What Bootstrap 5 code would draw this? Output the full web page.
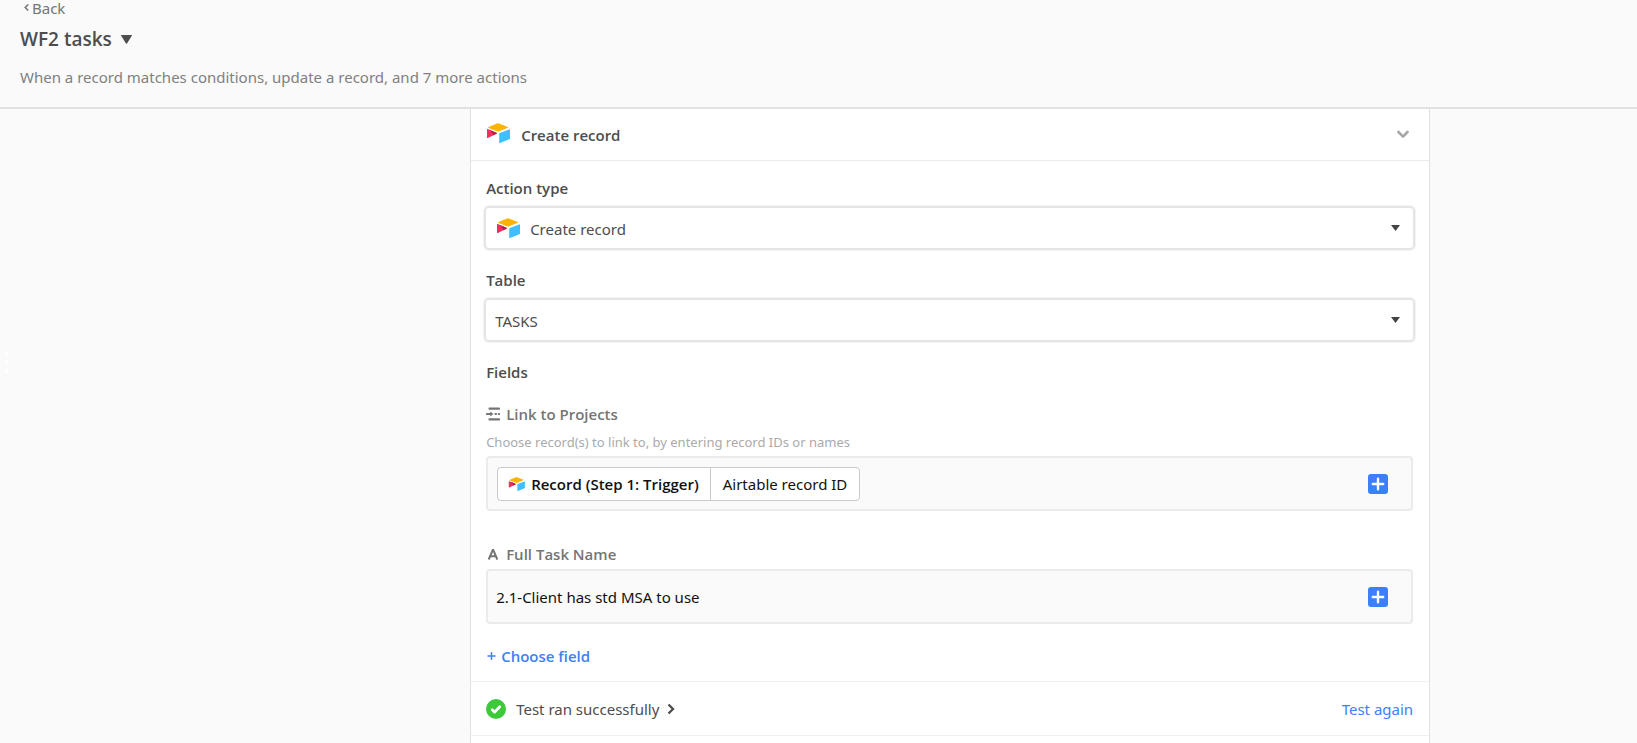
<!DOCTYPE html>
<html lang="en">
<head>
<meta charset="utf-8">
<meta name="viewport" content="width=device-width, initial-scale=1">
<title>WF2 tasks</title>
<link href="https://cdn.jsdelivr.net/npm/bootstrap@5.3.0/dist/css/bootstrap.min.css" rel="stylesheet">
<style>
  body { background: #fafafa; color: #4d4d4d; font: 15px/20px "Segoe UI", "Noto Sans", "Open Sans", sans-serif; }
  svg { display: block; flex: none; }
  button { line-height: 20px; }
  .page-head { height: 109px; border-bottom: 2px solid #e1e1e1; }
  .back-link { color: #757575; line-height: 16px; gap: 3px; padding-left: 4px; }
  .flow-title { font-size: 19px; line-height: 26px; font-weight: 600; font-family: "Segoe UI", "Open Sans", sans-serif; color: #4d4d4d; gap: 9px; padding: 10px 0 15px; }
  .flow-summary { color: #808080; }
  .stage { display: grid; grid-template-columns: minmax(0, 25fr) minmax(0, 960px) minmax(0, 11fr); }
  .step-panel { grid-column: 2; background: #fff; border: solid #e1e1e1; border-width: 0 1px; }
  .step-head { height: 52px; border-bottom: 1px solid #ebebeb; padding: 0 20px 0 15px; color: #4d4d4d; }
  .semi { font-weight: 600; font-family: "Segoe UI", "Open Sans", sans-serif; }
  .step-name, .group-name { font-size: 15px; line-height: 20px; }
  .step-name { margin: 0 auto 0 11px; }
  .step-body { padding: 17px 16px 15px 15px; border-bottom: 1px solid #f0f0f0; }
  .field-label { display: block; margin-bottom: 10px; }
  .group-name { margin-bottom: 22px; }
  .picker { margin-bottom: 22px; }
  .picker select { height: 40px; border: 0; border-radius: 3px; box-shadow: 0 0 0 2px #e5e5e5, 0 0 0 3px #f3f3f3; padding: 1px 40px 0 9px; color: #4d4d4d; font-size: 15px; line-height: 20px;
    background: #fff url("data:image/svg+xml,%3Csvg xmlns='http://www.w3.org/2000/svg' width='9' height='6'%3E%3Cpath d='M0 0h9L4.500 6z' fill='%23444'/%3E%3C/svg%3E") no-repeat right 13px center; background-size: 9px 6px; }
  .picker.with-logo select { padding-left: 44px; }
  .picker-logo { position: absolute; left: 10px; top: 10px; pointer-events: none; }
  .sub-label { color: #757575; gap: 6px; }
  .task-label { margin: 33px 0 5px; }
  .hint { color: #aaa; font-size: 13px; margin: 8px 0 4px; }
  .value-box { height: 55px; background: #fafafa; border: 2px solid #ebebeb; border-radius: 4px; padding: 0 23px 0 8px; }
  .value-box.has-token { padding-left: 9px; }
  .value-box input { color: #111; line-height: 20px; }
  .token { height: 34px; background: #fff; border: 1px solid #c9c9c9; border-radius: 4px; color: #111; }
  .token-part { padding: 0 11px 0 10px; gap: 6px; }
  .token-part + .token-part { border-left: 1px solid #c9c9c9; padding: 0 12px; }
  .plus-btn { width: 20px; height: 20px; }
  .accent { color: #4080f5; }
  .choose-field { margin-top: 22px; }
  .test-row { height: 54px; padding: 0 16px 0 15px; border-bottom: 1px solid #f0f0f0; }
  .test-toggle { color: #4d4d4d; margin-left: 10px; }
  .grip { position: absolute; left: 5px; top: 352px; }
</style>
</head>
<body>
<div class="d-flex flex-column vh-100 overflow-hidden">
  <header class="page-head px-3 flex-shrink-0">
    <div class="ps-1">
      <a href="#" class="back-link d-flex text-decoration-none">
        <svg class="mt-1" width="5" height="7" viewBox="0 0 5 7" fill="none" stroke="#757575" stroke-width="1.500"><path d="M4.300 .5L1.200 3.500l3.100 3"/></svg>Back</a>
      <h1 class="m-0 fs-6"><button type="button" class="flow-title d-flex align-items-center border-0 bg-transparent">WF2 tasks
        <svg width="11" height="9" viewBox="0 0 11 9"><path d="M.3 0h10.400Q11 .3 10.800.7L6.200 8.300q-.7.900-1.400 0L.2.700Q0 .3.300 0z" fill="#4d4d4d"/></svg></button></h1>
      <p class="flow-summary m-0">When a record matches conditions, update a record, and 7 more actions</p>
    </div>
  </header>

  <svg class="grip" width="4" height="22" fill="#fff"><circle cx="2" cy="2" r="2"/><circle cx="2" cy="10" r="2"/><circle cx="2" cy="19" r="2"/></svg>

  <main class="stage flex-grow-1">
    <section class="step-panel">
      <div class="step-head d-flex align-items-center">
        <svg width="24" height="20" viewBox="0 0 24 20" class="mb-1"><use href="#logo"/></svg>
        <h2 class="semi step-name">Create record</h2>
        <button type="button" class="border-0 bg-transparent p-0" aria-label="Collapse step"><svg width="12" height="9" viewBox="0 0 12 9" fill="none" stroke="#a6a6a6" stroke-width="2.600" stroke-linecap="round" stroke-linejoin="round"><path d="M1.500 2L6 6.600 10.500 2"/></svg></button>
      </div>

      <div class="step-body">
        <label class="field-label semi" for="actionType">Action type</label>
        <div class="picker with-logo position-relative">
          <select id="actionType" class="form-select"><option>Create record</option></select>
          <svg class="picker-logo" width="24" height="20" viewBox="0 0 24 20"><use href="#logo"/></svg>
        </div>

        <label class="field-label semi" for="tableName">Table</label>
        <div class="picker">
          <select id="tableName" class="form-select"><option>TASKS</option></select>
        </div>

        <h3 class="group-name semi">Fields</h3>

        <div class="sub-label semi d-flex align-items-center">
          <svg width="14" height="14" viewBox="0 0 14 14" fill="none" stroke="#757575" stroke-width="2.200" stroke-linecap="round"><path d="M3.500 1.600H13M3.500 12.400H13M1 7h3.500M9.500 7h.5M12.800 7h.2"/><path d="M4.300 4.600L7.400 7 4.300 9.400z" fill="#757575" stroke="none"/></svg>
          <span>Link to Projects</span>
        </div>
        <p class="hint">Choose record(s) to link to, by entering record IDs or names</p>
        <div class="value-box has-token d-flex align-items-center justify-content-between">
          <div class="token d-flex">
            <span class="token-part semi d-flex align-items-center"><svg width="17" height="14" viewBox="0 0 24 20"><use href="#logo"/></svg>Record (Step 1: Trigger)</span>
            <span class="token-part d-flex align-items-center">Airtable record ID</span>
          </div>
          <button type="button" class="plus-btn border-0 bg-transparent p-0" aria-label="Insert value"><svg width="20" height="20"><use href="#plus"/></svg></button>
        </div>

        <label class="sub-label task-label semi d-flex align-items-center" for="taskName">
          <svg width="14" height="14" viewBox="0 0 14 14" fill="none" stroke="#757575" stroke-width="2"><path d="M2.700 12.500L7 2.300l4.300 10.200M4.200 9.300h5.600" stroke-linejoin="bevel"/></svg>
          <span>Full Task Name</span>
        </label>
        <div class="value-box d-flex align-items-center">
          <input id="taskName" type="text" class="border-0 bg-transparent p-0 flex-grow-1" value="2.1-Client has std MSA to use">
          <button type="button" class="plus-btn border-0 bg-transparent p-0" aria-label="Insert value"><svg width="20" height="20"><use href="#plus"/></svg></button>
        </div>

        <button type="button" class="choose-field accent semi d-flex align-items-center gap-1 border-0 bg-transparent p-0"><svg width="11" height="10" viewBox="0 0 11 10" stroke="#4080f5" stroke-width="1.400"><path d="M1.500 5h8M5.500 1v8"/></svg>Choose field</button>
      </div>

      <div class="test-row d-flex align-items-center">
        <svg width="20" height="20" viewBox="0 0 20 20"><circle cx="10" cy="10" r="10" fill="#3dc93a"/><path d="M6.200 10.800l2.500 2.300 5-5.300" fill="none" stroke="#fff" stroke-width="2.800" stroke-linecap="round" stroke-linejoin="round"/></svg>
        <button type="button" class="test-toggle d-flex align-items-center gap-2 border-0 bg-transparent p-0 me-auto">Test ran successfully
          <svg width="8" height="12" viewBox="0 0 8 12" fill="none" stroke="#4d4d4d" stroke-width="2.300"><path d="M1.500 1.500L6 6l-4.500 4.500"/></svg></button>
        <a href="#" class="accent text-decoration-none">Test again</a>
      </div>
    </section>
  </main>
</div>

<svg width="0" height="0" class="position-absolute" aria-hidden="true">
  <defs>
    <symbol id="logo" viewBox="0 0 24 20">
      <path d="M11 .4q1-.4 2 0l8.800 3.500q.9.500 0 .9L13 8.300q-1 .4-2 0L2.500 4.900q-.9-.5 0-.9z" fill="#fcb400"/>
      <path d="M1 6.500q0-.8.800-.5l8.600 3.800q.9.500.1.900L1.800 15q-.8.300-.8-.5z" fill="#f82b60"/>
      <path d="M4.500 7.200l5.900 2.600q.9.500.1.900L7.400 12.200z" fill="#ba1e45"/>
      <path d="M13.200 11q0-.6.600-.9l9.300-3.700q.9-.3.900.5v8.500q0 .6-.6.800L14 19.900q-.8.200-.8-.5z" fill="#3fbfff"/>
    </symbol>
    <symbol id="plus" viewBox="0 0 20 20">
      <rect width="20" height="20" rx="3" fill="#3b7ffa"/>
      <path d="M4.800 10h10.400M10 4.800v10.400" stroke="#fff" stroke-width="2.400" stroke-linecap="round"/>
    </symbol>
  </defs>
</svg>
<script src="https://cdn.jsdelivr.net/npm/bootstrap@5.3.0/dist/js/bootstrap.bundle.min.js"></script>
</body>
</html>
